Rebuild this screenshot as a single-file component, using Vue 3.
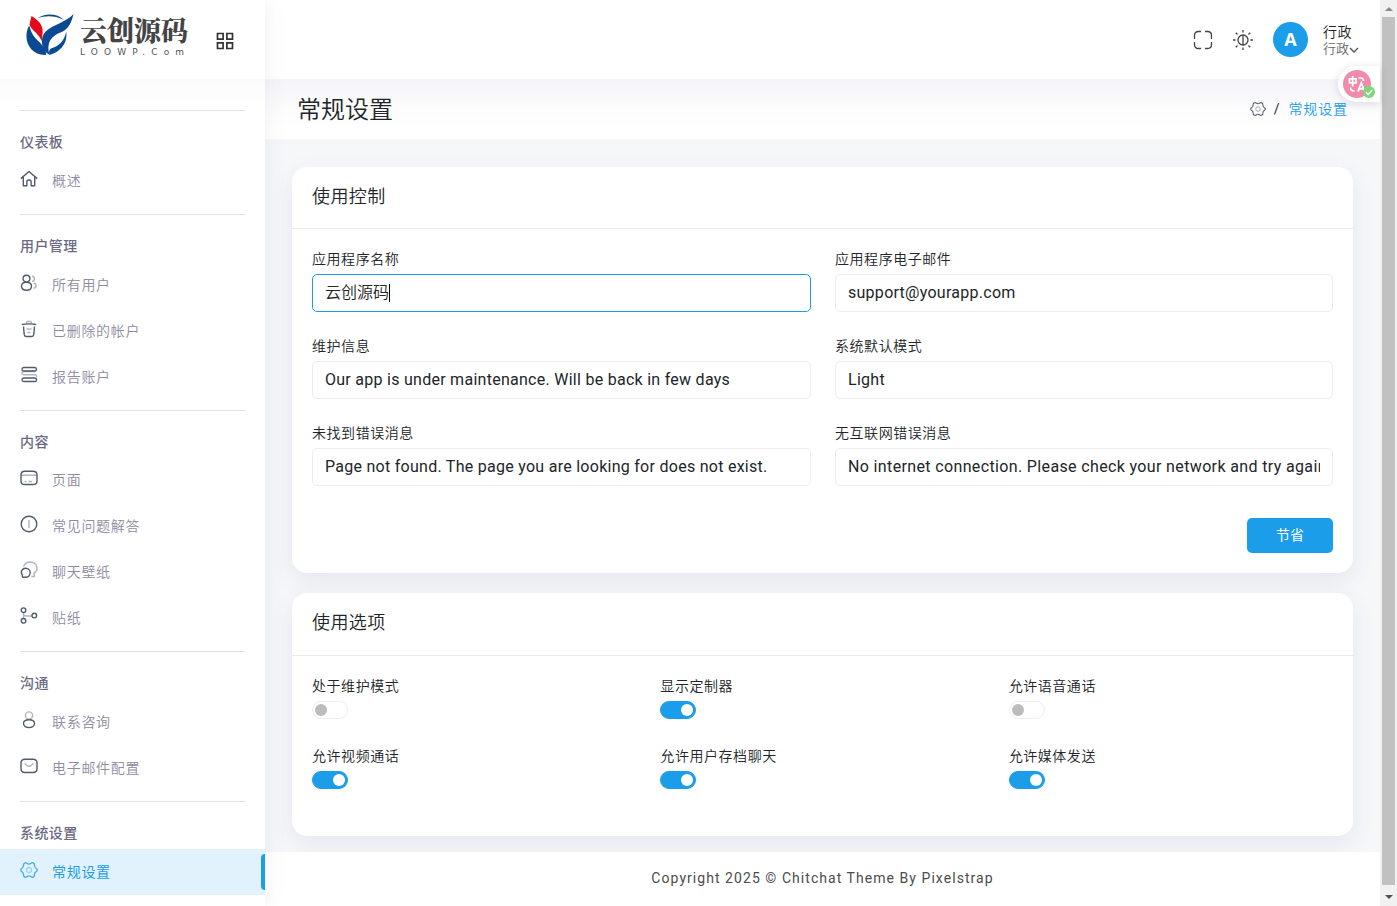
<template>
  <div class="page">
    <aside class="sidebar">
      <div class="sidebar__brand">
        <svg class="brand-mark" viewBox="0 0 50 44" fill="none">
          <path d="M3 13C-3 26 4 42 20 42c2 0 1-3 0-5C17 28 8 27 4.500 14c-.3-1.500-1-2.500-1.500-1z" fill="#0b4a93" />
          <path d="M12 4.500C20-1.500 33-.5 39 6 30 1.500 20 1.500 12 4.500z" fill="#0b4a93" />
          <path d="M6 2c7 4 12 9 11.500 17l-1 9C14 20 6 17 4 11z" fill="#e20a1b" />
          <path d="M49 0C47 9 44 15 37 18.500c-11 4-16 11-12.500 23.500-9-5-10-18-4-24C29 10 41 9 49 0z" fill="#0b4a93" />
          <path d="M41.500 18c2 12-6 21-17 24-1-4 0-5 1-6.500 9-2.500 14.500-8.500 16-17.500z" fill="#0b4a93" />
        </svg>
        <div class="brand-text">
          <span class="brand-text__name">云创源码</span>
          <span class="brand-text__domain">LOOWP.Com</span>
        </div>
        <svg class="grid-icon" viewBox="0 0 18 18" fill="none" stroke="#333" stroke-width="1.7">
          <path d="M1.5 1.5h5.6v5.6H1.5zM10.9 1.5h5.6v5.6h-5.6zM1.5 10.9h5.6v5.6H1.5zM10.9 10.9h5.6v5.6h-5.6z" />
        </svg>
      </div>

      <nav class="sidebar__nav">
        <section v-for="section in menu" :key="section.title" class="nav-section">
          <h6 class="nav-section__title">{{ section.title }}</h6>
          <a
            v-for="item in section.items"
            :key="item.label"
            :class="['nav-item', { 'nav-item--active': item.active }]"
          >
            <svg class="nav-item__icon" viewBox="0 0 18 18">
              <path
                v-for="(shape, i) in icons[item.icon]"
                :key="i"
                :d="shape.d"
                :class="{ soft: shape.soft }"
              />
            </svg>
            <span>{{ item.label }}</span>
          </a>
        </section>
      </nav>
    </aside>

    <div class="main">
      <header class="topbar">
        <svg class="topbar__expand" viewBox="0 0 20 20">
          <path d="M1.5 9V5.500Q1.500 1.500 5.500 1.500H8M12 1.500h2.500Q18.500 1.500 18.500 5.500V9M18.500 12v2.500Q18.500 18.500 14.500 18.500H12M8 18.500H5.500Q1.500 18.500 1.500 14.500V12" />
        </svg>
        <svg class="topbar__theme" viewBox="0 0 20 20">
          <circle cx="10" cy="10" r="5" />
          <path d="M10 5v10M10 0v2.500M10 17.500V20M0 10h2.500M17.500 10H20M2.800 2.800l1.700 1.700M15.500 15.500l1.700 1.700M2.800 17.200l1.700-1.700M15.500 4.500l1.700-1.700" />
        </svg>
        <div class="avatar">A</div>
        <div class="account">
          <span class="account__name">行政</span>
          <span class="account__role">
            行政
            <svg viewBox="0 0 10 6"><path d="M1 1l4 4 4-4" /></svg>
          </span>
        </div>
      </header>

      <div class="page-title">
        <h3>常规设置</h3>
        <div class="breadcrumb">
          <svg class="breadcrumb__icon" viewBox="0 0 18 18">
            <path v-for="(shape, i) in icons.gear" :key="i" :d="shape.d" :class="{ soft: shape.soft }" />
          </svg>
          <span class="breadcrumb__sep">/</span>
          <span class="breadcrumb__current">常规设置</span>
        </div>
      </div>

      <main class="content">
        <div class="card card--control">
          <div class="card__header">使用控制</div>
          <div class="card__body">
            <div class="form-grid">
              <div v-for="field in fields" :key="field.label" class="field">
                <label>{{ field.label }}</label>
                <div
                  :class="[
                    'form-control',
                    { 'form-control--focus': field.focus, 'form-control--long': field.long }
                  ]"
                >
                  <span class="form-control__text">{{ field.value }}<i v-if="field.focus" class="caret"></i></span>
                </div>
              </div>
            </div>
            <div class="actions">
              <button class="btn-save">节省</button>
            </div>
          </div>
        </div>

        <div class="card card--options">
          <div class="card__header">使用选项</div>
          <div class="options-grid">
            <div v-for="option in options" :key="option.label" class="option">
              <label>{{ option.label }}</label>
              <button
                :class="['switch', { 'switch--on': option.on }]"
                @click="option.on = !option.on"
              ></button>
            </div>
          </div>
        </div>
      </main>

      <footer class="footer">Copyright 2025 © Chitchat Theme By Pixelstrap</footer>

      <div class="translate">
        <div class="translate__ball">
          <svg viewBox="0 0 28 28" fill="none" stroke="#fff" stroke-width="1.800">
            <path d="M6.500 8.800h6.500v4H6.500zM9.700 6v10.500" />
            <path d="M15 21.500l3.300-8.500 3.300 8.500M16.300 18.800h4" />
            <path d="M15.500 8h2.500q2.500 0 2.500 3M7.500 17.500q0 3.500 4 3.500" stroke-width="1.600" />
          </svg>
        </div>
        <svg class="translate__check" viewBox="0 0 12 12">
          <circle cx="6" cy="6" r="6" fill="#7fd67c" />
          <path d="M3 6.200l2.200 2.200L9.200 4" fill="none" stroke="#fff" stroke-width="1.400" />
        </svg>
      </div>
    </div>

    <div class="scrollbar">
      <span class="scrollbar__arrow"></span>
      <span class="scrollbar__thumb"></span>
      <span class="scrollbar__arrow scrollbar__arrow--down"></span>
    </div>
  </div>
</template>

<script setup>
import { reactive } from 'vue';

const icons = {
  home: [
    { d: 'M.8 8.600L9 1.500l8.200 7.100M3.300 7v8.800h3.600V11.500q0-1.500 2.100-1.500t2.100 1.500v4.300h3.600V7' }
  ],
  users: [
    { d: 'M6.500 1.200a3.300 3.300 0 1 1 0 6.800a3.300 3.300 0 1 1 0-6.800zM6.500 8.300c3 0 5 1.700 5 4s-2 4-5 4-5-1.700-5-4 2-4 5-4z' },
    { d: 'M12 2.300c3 0 3.500 5 0 5.200M13.500 9.300c3.500.4 3.500 4.600 0 5', soft: true }
  ],
  trash: [
    { d: 'M1.800 4.500Q9 3.300 16.200 4.500M3.500 6.500l.7 8q.2 2 2 2h5.600q1.800 0 2-2l.7-8' },
    { d: 'M6.500 3.800l.5-2.300h4l.5 2.300M6.500 9h5M7.500 12.500h3', soft: true }
  ],
  report: [
    { d: 'M3.800 1.500h11q1.700 0 1.700 1.800t-1.700 1.700h-11Q2 5 2 3.300t1.800-1.800zM3.800 12h11q1.700 0 1.700 1.800t-1.700 1.700h-11Q2 15.500 2 13.800T3.800 12z' },
    { d: 'M15 5.500H4Q2 5.500 2 7t2 1.700h11q2 0 1.500 2.800', soft: true }
  ],
  page: [
    { d: 'M5 2.300h8q4 0 4 3.600v6q0 3.600-4 3.600H5q-4 0-4-3.600v-6Q1 2.300 5 2.300z' },
    { d: 'M1 6.200h16M4.500 12.500h2M8.500 12.500h3.500', soft: true }
  ],
  info: [
    { d: 'M9 1.200a7.800 7.800 0 1 1 0 15.600a7.800 7.800 0 1 1 0-15.600z' },
    { d: 'M9 5v8', soft: true }
  ],
  chat: [
    { d: 'M5.700 7.300a4.300 4.300 0 0 1 0 8.900H2.500l-.3-2.400c-2-3 0-6.500 3.500-6.500z' },
    { d: 'M3.500 5.500C6-.5 15-.5 16.800 6c.6 3-1 5.200-2.800 6l.3 3.500h-3', soft: true }
  ],
  sticker: [
    { d: 'M3.500.9a2.300 2.300 0 1 1 0 4.600a2.300 2.300 0 1 1 0-4.600zM3.500 11.500a2.300 2.300 0 1 1 0 4.600a2.300 2.300 0 1 1 0-4.600zM14.300 6.300a2.300 2.300 0 1 1 0 4.600a2.300 2.300 0 1 1 0-4.600z' },
    { d: 'M3.500 5.500v6M3.500 7.500q.5 1.500 3 1.500H12', soft: true }
  ],
  contact: [
    { d: 'M9 8.700c3.300 0 5.500 1.700 5.500 3.900s-2.200 4-5.500 4-5.500-1.800-5.500-4 2.200-3.900 5.500-3.900z' },
    { d: 'M9 .9a3.600 3.600 0 1 1 0 7.200a3.600 3.600 0 1 1 0-7.200z', soft: true }
  ],
  mail: [
    { d: 'M5 2.300h8q4 0 4 3.800v5.400q0 4-4 4H5q-4 0-4-4V6.100Q1 2.300 5 2.300z' },
    { d: 'M4.500 6.500l3 2.300q1.500 1 3 0l3-2.300', soft: true }
  ],
  gear: [
    { d: 'M6.800 2.200Q9 4 11.200 2.200q1-.8 2.300 0 1.300.8 1 2.200-.2 2 1.500 2.800 1.200.5 1.200 1.800t-1.200 1.800q-1.700.8-1.500 2.800.3 1.400-1 2.200-1.300.8-2.300 0Q9 14 6.800 15.800q-1 .8-2.300 0-1.300-.8-1-2.200.2-2-1.500-2.800Q.8 10.300.8 9T2 7.200q1.700-.8 1.500-2.800-.3-1.400 1-2.200 1.300-.8 2.300 0z' },
    { d: 'M9 6.500a2.500 2.500 0 1 1 0 5a2.500 2.500 0 1 1 0-5z', soft: true }
  ]
};

const menu = [
  {
    title: '仪表板',
    items: [{ label: '概述', icon: 'home' }]
  },
  {
    title: '用户管理',
    items: [
      { label: '所有用户', icon: 'users' },
      { label: '已删除的帐户', icon: 'trash' },
      { label: '报告账户', icon: 'report' }
    ]
  },
  {
    title: '内容',
    items: [
      { label: '页面', icon: 'page' },
      { label: '常见问题解答', icon: 'info' },
      { label: '聊天壁纸', icon: 'chat' },
      { label: '贴纸', icon: 'sticker' }
    ]
  },
  {
    title: '沟通',
    items: [
      { label: '联系咨询', icon: 'contact' },
      { label: '电子邮件配置', icon: 'mail' }
    ]
  },
  {
    title: '系统设置',
    items: [{ label: '常规设置', icon: 'gear', active: true }]
  }
];

const fields = [
  { label: '应用程序名称', value: '云创源码', focus: true },
  { label: '应用程序电子邮件', value: 'support@yourapp.com' },
  { label: '维护信息', value: 'Our app is under maintenance. Will be back in few days' },
  { label: '系统默认模式', value: 'Light' },
  { label: '未找到错误消息', value: 'Page not found. The page you are looking for does not exist.' },
  {
    label: '无互联网错误消息',
    value: 'No internet connection. Please check your network and try again.',
    long: true
  }
];

const options = reactive([
  { label: '处于维护模式', on: false },
  { label: '显示定制器', on: true },
  { label: '允许语音通话', on: false },
  { label: '允许视频通话', on: true },
  { label: '允许用户存档聊天', on: true },
  { label: '允许媒体发送', on: true }
]);
</script>

<style>
body {
  margin: 0;
  overflow: hidden;
}
</style>

<style scoped>
.page {
  --primary: #1c9dea;
  display: flex;
  height: 906px;
  overflow: hidden;
  background: #f6f7f9;
  color: #212529;
  font-family: Roboto, "Noto Sans CJK SC", sans-serif;
  font-weight: 350;
  font-size: 14px;
}

.page * {
  box-sizing: border-box;
}

h3,
h6 {
  margin: 0;
}

svg {
  display: block;
  flex: none;
}

/* Sidebar */
.sidebar {
  width: 265px;
  flex: none;
  background: #fff;
  box-shadow: 0 0 20px rgba(89, 102, 122, 0.1);
  z-index: 2;
}

.sidebar__brand {
  display: flex;
  align-items: flex-start;
  height: 79px;
  padding: 14px 0 0 25px;
}

.brand-mark {
  width: 50px;
  height: 43px;
}

.brand-text {
  display: flex;
  flex-direction: column;
  width: 110px;
  margin-left: 5px;
}

.brand-text__name {
  font-family: "Noto Serif CJK SC", "Noto Sans CJK SC", sans-serif;
  font-size: 27px;
  line-height: 32px;
  font-weight: 900;
  color: #444;
}

.brand-text__domain {
  font-family: "DejaVu Sans", sans-serif;
  font-size: 9px;
  line-height: 12px;
  letter-spacing: 6.1px;
  font-weight: 400;
  color: #555;
  white-space: nowrap;
}

.grid-icon {
  width: 18px;
  height: 18px;
  margin: 18px 0 0 26px;
}

.sidebar__nav {
  padding-top: 31px;
  background: linear-gradient(#fbfbfc, #fff 30px);
}

.nav-section {
  padding-bottom: 10px;
}

.nav-section__title {
  height: 47.8px;
  margin: 0 20px;
  padding-top: 15px;
  border-top: 1px solid #dfe2e4;
  font-size: 14px;
  line-height: 32px;
  font-weight: 500;
  letter-spacing: 0.4px;
  color: #6a6a82;
}

.nav-item {
  position: relative;
  display: flex;
  align-items: center;
  height: 46px;
  padding-left: 20px;
  gap: 14px;
  letter-spacing: 0.7px;
}

.nav-item span {
  margin-top: -2px;
  color: #8e8c9f;
}

.nav-item__icon {
  width: 18px;
  height: 18px;
  margin-top: -4px;
  fill: none;
  stroke: #515b6b;
  stroke-width: 1.4;
  stroke-linejoin: round;
}

.soft {
  opacity: 0.45;
}

.nav-item--active {
  background: #e1f2fd;
}

.nav-item--active span {
  color: var(--primary);
  font-weight: 400;
}

.nav-item--active .nav-item__icon {
  stroke: #49b0ee;
}

.nav-item--active::after {
  content: '';
  position: absolute;
  right: 0;
  top: 5px;
  width: 4px;
  height: 36px;
  border-radius: 4px 0 0 4px;
  background: var(--primary);
}

/* Top bar */
.main {
  position: relative;
  flex: 1;
  min-width: 0;
  display: flex;
  flex-direction: column;
}

.topbar {
  display: flex;
  align-items: center;
  justify-content: flex-end;
  flex: none;
  height: 79px;
  padding-right: 20px;
  background: #fff;
}

.topbar__expand,
.topbar__theme {
  width: 20px;
  height: 20px;
  margin-right: 20px;
  fill: none;
  stroke: #444;
  stroke-width: 1.3;
}

.avatar {
  width: 35px;
  height: 35px;
  border-radius: 50%;
  background: var(--primary);
  color: #fff;
  font: 700 18px/34px "Open Sans", sans-serif;
  text-align: center;
}

.account {
  display: flex;
  flex-direction: column;
  width: 37px;
  margin-left: 15px;
  padding-top: 1px;
}

.account__name {
  font-size: 14px;
  line-height: 17px;
  letter-spacing: 0.5px;
}

.account__role {
  display: flex;
  align-items: center;
  font-size: 13px;
  line-height: 16px;
  color: #666;
}

.account__role svg {
  width: 10px;
  height: 6px;
  margin-top: 2px;
  fill: none;
  stroke: #555;
  stroke-width: 1.4;
}

/* Page title */
.page-title {
  display: flex;
  align-items: center;
  justify-content: space-between;
  flex: none;
  height: 60px;
  padding: 0 32px;
  background: linear-gradient(#f4f4f9, #fcfcfd 28px, #fff 50px);
}

.page-title h3 {
  margin-top: -4px;
  font-size: 24px;
  font-weight: 350;
}

.breadcrumb {
  display: flex;
  align-items: center;
  font-size: 14px;
  letter-spacing: 0.9px;
}

.breadcrumb__icon {
  width: 16px;
  height: 16px;
  fill: none;
  stroke: #515b6b;
  stroke-width: 1.2;
}

.breadcrumb__sep {
  margin: 0 8px;
  font-weight: 400;
}

.breadcrumb__current {
  margin-top: -2px;
  color: var(--primary);
}

/* Cards */
.content {
  flex: none;
  height: 713px;
  padding: 28px 27px 0;
}

.card {
  border-radius: 15px;
  background: #fff;
  box-shadow: 0 8px 25px rgba(82, 77, 141, 0.09);
}

.card--control {
  height: 406px;
  margin-bottom: 20px;
}

.card--options {
  height: 243px;
}

.card__header {
  height: 62px;
  padding: 0 20px;
  border-bottom: 1px solid #e9ebee;
  font-size: 18px;
  line-height: 59px;
  letter-spacing: 0.4px;
}

.card--options .card__header {
  height: 63px;
  line-height: 60px;
}

.card__body {
  padding: 20px;
}

.form-grid {
  display: grid;
  grid-template-columns: 499px 498px;
  gap: 24px;
}

.field label,
.option label {
  display: block;
  font-size: 14px;
  line-height: 20px;
  letter-spacing: 0.55px;
}

.field label {
  margin-bottom: 5px;
}

.form-control {
  height: 38px;
  padding: 0 12px;
  border: 1px solid #ebedf0;
  border-radius: 5px;
  font-size: 16px;
  line-height: 36px;
  font-weight: 400;
}

.form-control__text {
  display: block;
  overflow: hidden;
  white-space: nowrap;
  letter-spacing: 0.27px;
}

.form-control--long .form-control__text {
  letter-spacing: 0.36px;
}

.form-control--focus {
  border-color: var(--primary);
}

.form-control--focus .form-control__text {
  font-weight: 350;
  letter-spacing: 0;
}

.caret {
  display: inline-block;
  width: 1px;
  height: 18px;
  vertical-align: -4px;
  background: #000;
}

.actions {
  display: flex;
  justify-content: flex-end;
  padding-top: 32px;
}

.btn-save {
  width: 86px;
  height: 35px;
  padding: 0 0 3px;
  border: 0;
  border-radius: 5px;
  background: var(--primary);
  color: #fff;
  font: inherit;
  font-weight: 400;
  cursor: pointer;
}

.options-grid {
  display: grid;
  grid-template-columns: repeat(3, 1fr);
  gap: 30px 24px;
  padding: 20px;
}

.option {
  height: 40px;
}

.switch {
  display: block;
  width: 36px;
  height: 18px;
  margin-top: 5px;
  padding: 2px;
  border: 1px solid #eceef1;
  border-radius: 9px;
  background: #fff;
  cursor: pointer;
}

.switch::before {
  content: '';
  display: block;
  width: 12px;
  height: 12px;
  border-radius: 50%;
  background: #bcbcbc;
}

.switch--on {
  border-color: var(--primary);
  background: var(--primary);
}

.switch--on::before {
  margin-left: 18px;
  background: #fff;
}

.footer {
  flex: 1;
  background: #fff;
  text-align: center;
  font-size: 14px;
  font-weight: 400;
  line-height: 53px;
  letter-spacing: 1.05px;
  color: #4c4c4c;
  z-index: 1;
}

/* Floating translate button, docked to the right edge */
.translate {
  position: absolute;
  top: 66px;
  right: 0;
  width: 42px;
  height: 36px;
  padding: 4px 5px;
  border-radius: 18px 0 0 18px;
  background: #fff;
  box-shadow: 0 2px 8px rgba(60, 60, 100, 0.18);
}

.translate__ball {
  width: 28px;
  height: 28px;
  border-radius: 50%;
  background: #f08bab;
}

.translate__check {
  position: absolute;
  right: 5px;
  bottom: 4px;
  width: 12px;
  height: 12px;
}

/* Scrollbar */
.scrollbar {
  display: flex;
  flex-direction: column;
  align-items: center;
  justify-content: space-between;
  width: 17px;
  flex: none;
  background: #f1f1f1;
}

.scrollbar__arrow {
  width: 0;
  height: 0;
  margin: 7px 0 6px;
  border: 4px solid transparent;
  border-top: 0;
  border-bottom-color: #8a8a8a;
}

.scrollbar__thumb {
  flex: 1;
  width: 13px;
  background: #c1c1c1;
}

.scrollbar__arrow--down {
  margin: 10px 0 7px;
  border: 4px solid transparent;
  border-bottom: 0;
  border-top-color: #505050;
}
</style>
